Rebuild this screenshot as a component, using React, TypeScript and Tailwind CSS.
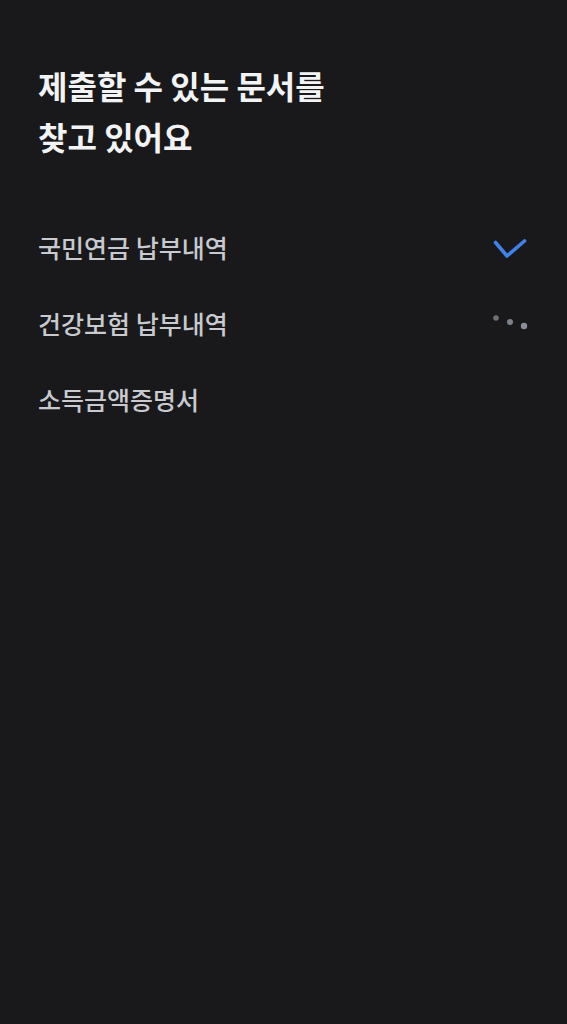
import React from "react";

const font = { fontFamily: '"Noto Sans CJK KR", "Noto Sans", sans-serif' };

export default function App() {
  return (
    <div className="w-[567px] h-[1024px] bg-[#19191b] text-white" style={font}>
      <div className="pl-[38px] pr-[40px] pt-[60px]">
        <h1 className="text-[32px] leading-[51px] font-bold text-[#f2f3f5]">
          제출할 수 있는 문서를
          <br />
          찾고 있어요
        </h1>
        <div className="mt-[64px] flex flex-col gap-[32px]">
          <div className="flex items-center justify-between h-[44px]">
            <span className="text-[25px] font-medium text-[#c8cad0]">국민연금 납부내역</span>
            <svg width="36" height="24" viewBox="0 0 36 24">
              <path d="M4.5 6.5 L16 20 L33.5 5" fill="none" stroke="#3f82ea" strokeWidth="3.6" strokeLinecap="round" strokeLinejoin="round" />
            </svg>
          </div>
          <div className="flex items-center justify-between h-[44px]">
            <span className="text-[25px] font-medium text-[#c8cad0]">건강보험 납부내역</span>
            <svg width="40" height="20" viewBox="0 0 40 20" className="mr-[-5px]">
              <circle cx="4" cy="4" r="2.8" fill="#6c7079" />
              <circle cx="18" cy="8" r="3" fill="#7d818a" />
              <circle cx="32" cy="12" r="3.2" fill="#8b8f98" />
            </svg>
          </div>
          <div className="flex items-center justify-between h-[44px]">
            <span className="text-[25px] font-medium text-[#c8cad0]">소득금액증명서</span>
          </div>
        </div>
      </div>
    </div>
  );
}
